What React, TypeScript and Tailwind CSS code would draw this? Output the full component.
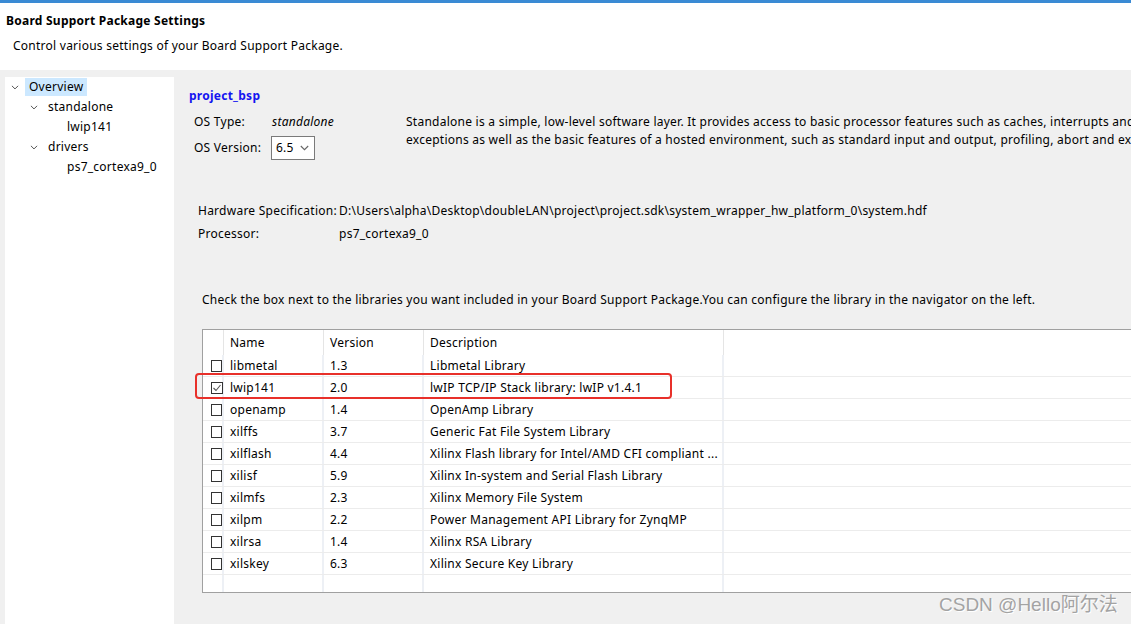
import React from "react";

const libs = [
  { name: "libmetal", version: "1.3", desc: "Libmetal Library", checked: false },
  { name: "lwip141", version: "2.0", desc: "lwIP TCP/IP Stack library: lwIP v1.4.1", checked: true },
  { name: "openamp", version: "1.4", desc: "OpenAmp Library", checked: false },
  { name: "xilffs", version: "3.7", desc: "Generic Fat File System Library", checked: false },
  { name: "xilflash", version: "4.4", desc: "Xilinx Flash library for Intel/AMD CFI compliant ...", checked: false },
  { name: "xilisf", version: "5.9", desc: "Xilinx In-system and Serial Flash Library", checked: false },
  { name: "xilmfs", version: "2.3", desc: "Xilinx Memory File System", checked: false },
  { name: "xilpm", version: "2.2", desc: "Power Management API Library for ZynqMP", checked: false },
  { name: "xilrsa", version: "1.4", desc: "Xilinx RSA Library", checked: false },
  { name: "xilskey", version: "6.3", desc: "Xilinx Secure Key Library", checked: false },
];

const Chevron = ({ className = "", w = 9, h = 6 }: { className?: string; w?: number; h?: number }) => (
  <svg width={w} height={h} viewBox="0 0 9 6" className={className}>
    <polyline points="0.8,1 4.5,4.7 8.2,1" fill="none" stroke="currentColor" strokeWidth="1.1" />
  </svg>
);

const Checkbox = ({ checked }: { checked: boolean }) => (
  <div className="w-[12px] h-[12px] border border-[#333333] bg-white flex items-center justify-center">
    {checked && (
      <svg width="10" height="10" viewBox="0 0 10 10">
        <polyline points="1.5,5 4,7.5 8.5,2" fill="none" stroke="#555555" strokeWidth="1.1" />
      </svg>
    )}
  </div>
);

const TreeRow = ({
  indent,
  label,
  expandable,
  selected,
}: {
  indent: number;
  label: string;
  expandable?: boolean;
  selected?: boolean;
}) => (
  <div className="h-[20px] flex items-center" style={{ paddingLeft: indent }}>
    <div className="w-[14px] flex items-center text-[#444444]">{expandable && <Chevron w={8} h={5} />}</div>
    <div className={`px-[4px] h-[18px] leading-[18px] ${selected ? "bg-[#cce8ff]" : ""}`}>{label}</div>
  </div>
);

export default function App() {
  return (
    <div className="w-[1131px] h-[624px] overflow-hidden bg-[#f0f0f0] flex flex-col relative font-['Noto_Sans','Noto_Sans_CJK_SC',sans-serif] text-[12px] tracking-[0.25px] text-black">
      <div className="h-[3px] bg-[#3a8ad4] shrink-0" />

      {/* Header */}
      <div className="bg-white h-[67px] shrink-0 pl-[6px] pt-[9px]">
        <div className="font-bold leading-[18px]">Board Support Package Settings</div>
        <div className="pl-[7px] mt-[7px] leading-[18px]">Control various settings of your Board Support Package.</div>
      </div>

      <div className="flex flex-1 min-h-0 pt-[7px] pl-[5px]">
        {/* Navigator tree */}
        <div className="w-[169px] shrink-0 bg-white">
          <TreeRow indent={6} label="Overview" expandable selected />
          <TreeRow indent={25} label="standalone" expandable />
          <TreeRow indent={44} label="lwip141" />
          <TreeRow indent={25} label="drivers" expandable />
          <TreeRow indent={44} label="ps7_cortexa9_0" />
        </div>

        {/* Content */}
        <div className="flex-1 min-w-0 overflow-hidden pl-[15px] pt-[10px]">
          <div className="font-bold text-[#1414f0] leading-[18px] whitespace-nowrap">project_bsp</div>

          <div className="flex mt-[8px]">
            <div className="w-[217px] shrink-0 pl-[5px]">
              <div className="flex h-[18px] items-center">
                <div className="w-[78px]">OS Type:</div>
                <div className="italic">standalone</div>
              </div>
              <div className="flex h-[24px] items-center mt-[5px]">
                <div className="w-[77px] whitespace-nowrap">OS Version:</div>
                <div className="w-[44px] h-[24px] border border-[#7a7a7a] bg-white flex items-center justify-between pl-[4px] pr-[5px]">
                  <span>6.5</span>
                  <Chevron className="text-[#666666]" />
                </div>
              </div>
            </div>
            <div className="whitespace-nowrap leading-[18px]">
              <div>Standalone is a simple, low-level software layer. It provides access to basic processor features such as caches, interrupts and</div>
              <div>exceptions as well as the basic features of a hosted environment, such as standard input and output, profiling, abort and exit.</div>
            </div>
          </div>

          <div className="pl-[9px] mt-[42px] whitespace-nowrap">
            <div className="flex h-[18px] items-center">
              <div className="w-[141px]">Hardware Specification:</div>
              <div>D:\Users\alpha\Desktop\doubleLAN\project\project.sdk\system_wrapper_hw_platform_0\system.hdf</div>
            </div>
            <div className="flex h-[18px] items-center mt-[5px]">
              <div className="w-[141px]">Processor:</div>
              <div>ps7_cortexa9_0</div>
            </div>
          </div>

          <div className="pl-[13px] mt-[48px] leading-[18px] whitespace-nowrap">
            Check the box next to the libraries you want included in your Board Support Package.You can configure the library in the navigator on the left.
          </div>

          {/* Library table */}
          <div className="relative ml-[13px] mt-[20px] w-[1000px] h-[264px] border border-[#a0a0a0] bg-white">
            <div className="flex h-[25px] items-center">
              <div className="w-[21px] h-full border-r border-[#e5e5e5]" />
              <div className="w-[100px] h-full border-r border-[#e5e5e5] pl-[6px] flex items-center">Name</div>
              <div className="w-[100px] h-full border-r border-[#e5e5e5] pl-[6px] flex items-center">Version</div>
              <div className="w-[300px] h-full border-r border-[#e5e5e5] pl-[6px] flex items-center">Description</div>
              <div className="flex-1 h-full" />
            </div>
            {libs.map((l) => (
              <div key={l.name} className="flex h-[22px] border-b border-[#ececec] whitespace-nowrap">
                <div className="w-[21px] h-full border-r-2 border-[#edf0f5] pl-[8px] flex items-center">
                  <Checkbox checked={l.checked} />
                </div>
                <div className="w-[100px] h-full border-r-2 border-[#edf0f5] pl-[6px] flex items-center">{l.name}</div>
                <div className="w-[100px] h-full border-r-2 border-[#edf0f5] pl-[6px] flex items-center">{l.version}</div>
                <div className="w-[300px] h-full border-r-2 border-[#edf0f5] pl-[6px] flex items-center overflow-hidden">{l.desc}</div>
                <div className="flex-1 h-full" />
              </div>
            ))}
            <div className="flex h-[17px]">
              <div className="w-[21px] h-full border-r-2 border-[#edf0f5]" />
              <div className="w-[100px] h-full border-r-2 border-[#edf0f5]" />
              <div className="w-[100px] h-full border-r-2 border-[#edf0f5]" />
              <div className="w-[300px] h-full border-r-2 border-[#edf0f5]" />
            </div>

            {/* annotation */}
            <div className="absolute left-[-8px] top-[43px] w-[477px] h-[26px] border-2 border-[#e8302a] rounded-[4px] pointer-events-none" />
          </div>
        </div>
      </div>

      {/* watermark */}
      <div className="absolute left-[939px] top-[594px] text-[19px] leading-[22px] tracking-normal text-[#a3a3a3] font-['Liberation_Sans','Noto_Sans_CJK_SC',sans-serif] [text-shadow:1px_1px_0_#ffffff] whitespace-nowrap">
        CSDN @Hello阿尔法
      </div>
    </div>
  );
}
